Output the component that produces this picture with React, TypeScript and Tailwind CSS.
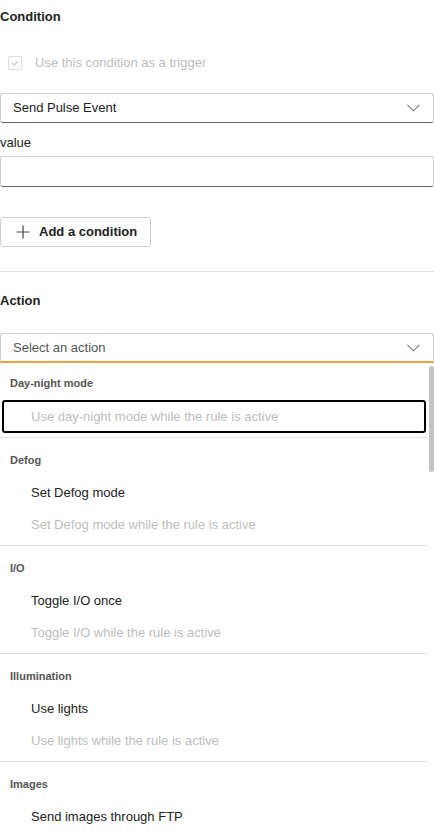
import React from 'react';

interface ActionGroup {
  title: string;
  items: { label: string; disabled?: boolean; focused?: boolean }[];
}

const groups: ActionGroup[] = [
  { title: 'Day-night mode', items: [{ label: 'Use day-night mode while the rule is active', disabled: true, focused: true }] },
  { title: 'Defog', items: [{ label: 'Set Defog mode' }, { label: 'Set Defog mode while the rule is active', disabled: true }] },
  { title: 'I/O', items: [{ label: 'Toggle I/O once' }, { label: 'Toggle I/O while the rule is active', disabled: true }] },
  { title: 'Illumination', items: [{ label: 'Use lights' }, { label: 'Use lights while the rule is active', disabled: true }] },
  { title: 'Images', items: [{ label: 'Send images through FTP' }, { label: 'Send images through HTTP' }] },
];

function Chevron() {
  return (
    <svg width="13" height="8" viewBox="0 0 13 8" className="shrink-0">
      <polyline points="0.5,0.8 6.5,6.8 12.5,0.8" fill="none" stroke="#7a7a7a" strokeWidth="1.1" />
    </svg>
  );
}

export default function App() {
  return (
    <div className="w-full bg-white text-[13px] leading-4 text-[#222]" style={{ fontFamily: '"Liberation Sans", Arial, sans-serif' }}>
      {/* Condition */}
      <div className="pt-[9px]">
        <h2 className="font-bold text-[13px] leading-4 text-[#222]">Condition</h2>

        <label className="mt-[30px] flex items-center gap-[13px] pl-2">
          <span className="flex h-[14px] w-[14px] items-center justify-center rounded-[2px] border border-[#dcdcdc]">
            <svg width="8" height="6" viewBox="0 0 8 6">
              <polyline points="0.8,2.8 3.2,5 7.2,0.8" fill="none" stroke="#c4c4c4" strokeWidth="1.1" />
            </svg>
          </span>
          <span className="text-[#bdbdbd]">Use this condition as a trigger</span>
        </label>

        <div className="mt-[22px] flex h-[30px] items-center justify-between rounded-[3px] border border-[#cfcfcf] border-b-[#666] pl-3 pr-[13px]">
          <span className="text-[#222]">Send Pulse Event</span>
          <Chevron />
        </div>

        <div className="mt-[12px] text-[#222]">value</div>
        <div className="mt-[5px] h-[31px] rounded-[3px] border border-[#cfcfcf] border-b-[#666]" />

        <button className="mt-[30px] flex h-[30px] w-[151px] items-center gap-[9px] rounded-[3px] border border-[#cfcfcf] pl-[15px]">
          <svg width="14" height="14" viewBox="0 0 14 14">
            <path d="M7 0.5V13.5M0.5 7H13.5" stroke="#444" strokeWidth="1.2" />
          </svg>
          <span className="font-bold text-[#222]">Add a condition</span>
        </button>
      </div>

      <div className="mt-[24px] h-px bg-[#e2e2e2]" />

      {/* Action */}
      <div className="pt-[21px]">
        <h2 className="font-bold text-[13px] leading-4 text-[#222]">Action</h2>

        <div className="mt-[24px] flex h-[30px] items-center justify-between rounded-t-[3px] border border-[#cfcfcf] border-b-2 border-b-[#e8a23a] pl-3 pr-[13px]">
          <span className="text-[#555]">Select an action</span>
          <Chevron />
        </div>

        <div className="relative pr-[6px]">
          {groups.map((g, gi) => (
            <div key={g.title} className={gi === 0 ? 'border-b border-[#e2e2e2] pb-[4px]' : 'border-b border-[#e2e2e2] pb-[4px]'}>
              <div className={gi === 0 ? 'pl-[10px] pt-[12px] pb-[9px] text-[11px] font-bold text-[#555]' : 'pl-[10px] pt-[14px] pb-[9px] text-[11px] font-bold text-[#555]'}>
                {g.title}
              </div>
              {g.items.map((it) =>
                it.focused ? (
                  <div key={it.label} className="mx-[2px] flex h-[33px] items-center rounded-[3px] border-2 border-black pl-[27px] text-[#bdbdbd]">
                    {it.label}
                  </div>
                ) : (
                  <div key={it.label} className={it.disabled ? 'flex h-8 items-center pl-[31px] text-[#bdbdbd]' : 'flex h-8 items-center pl-[31px] text-[#222]'}>
                    {it.label}
                  </div>
                ),
              )}
            </div>
          ))}
          {/* scrollbar thumb */}
          <div className="absolute right-0 top-[3px] h-[106px] w-[5px] rounded-full bg-[#c4c4c4]" />
        </div>
      </div>
    </div>
  );
}
